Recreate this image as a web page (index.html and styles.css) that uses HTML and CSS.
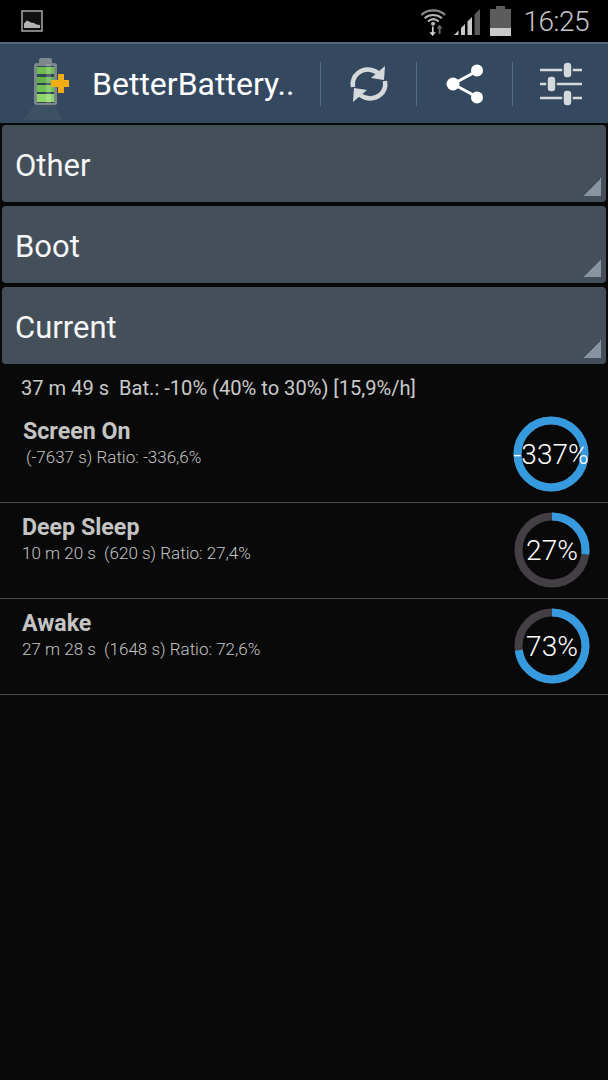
FILE: index.html
```html
<!DOCTYPE html>
<html lang="en">
<head>
<meta charset="utf-8">
<title>BetterBatteryStats</title>
<link rel="stylesheet" href="styles.css">
</head>
<body>
<header class="status">
  <svg class="st-pic" width="22" height="22" viewBox="0 0 22 22"><rect x="1" y="1" width="20" height="20" fill="#111" stroke="#b4b4b4" stroke-width="1.4"/><path d="M3 18V13.500L6 10.500 10 12.500 13 13 15.500 14.500 19 15V18Z" fill="#b4b4b4"/></svg>
  <div class="st-right">
    <svg class="st-wifi" width="28" height="30" viewBox="0 0 30 32"><g fill="none" stroke="#b5b5b5" stroke-width="2.200"><path d="M1.500 9.500C8 3 20 3 27 9.500" stroke="#8a8a8a"/><path d="M5 13C10 8.500 18 8.500 23.500 13"/><path d="M8.500 16.500C12 13.500 16.500 13.500 20 16.500"/></g><circle cx="14" cy="19" r="2.200" fill="#b5b5b5"/><path d="M12.800 22V28H10L13.500 32 17 28H14.600V22Z" fill="#d0d0d0"/><path d="M20 30V24H17.800L21 20 24.300 24H22V30Z" fill="#6d6d6d"/></svg>
    <svg class="st-signal" width="27" height="26" viewBox="0 0 27 26"><path d="M0 26L4.500 21.500V26Z" fill="#c8c8c8"/><path d="M7 19L11 15V26H7Z" fill="#c8c8c8"/><path d="M13.500 12.500L18 8V26H13.500Z" fill="#c8c8c8"/><path d="M20.500 5.500L26 0V26H20.500Z" fill="#5a5a5a"/></svg>
    <svg class="st-batt" width="21" height="30" viewBox="0 0 21 30"><path d="M6 0H15V3H21V30H0V3H6Z" fill="#5c5c5c"/><rect y="22" width="21" height="8" fill="#c9c9c9"/></svg>
    <span class="st-time">16:25</span>
  </div>
</header>
<nav class="bar">
  <svg class="logo" width="54" height="66" viewBox="0 0 54 66">
    <path d="M4 64L16 49H36L43 64Z" fill="#46586a" opacity=".55"/>
    <rect x="20" y="2" width="13" height="6" rx="2" fill="#7d8a8d"/>
    <rect x="15" y="7" width="23" height="42" rx="2.500" fill="#7b878a"/>
    <rect x="18" y="10" width="17" height="37" fill="#2f4552"/>
    <rect x="18" y="11" width="17" height="7" fill="#70bc50"/>
    <rect x="18" y="21" width="17" height="6" fill="#66b04c"/>
    <rect x="18" y="29" width="17" height="7" fill="#72c054"/>
    <rect x="18" y="38" width="17" height="8" fill="#8ed468"/>
    <rect x="27" y="8" width="5" height="39" fill="#fff" opacity=".18"/>
    <path d="M32 24H39V18H45V24H50V31H45V37H39V31H32Z" fill="#f0ae14"/>
  </svg>
  <span class="bar-title">BetterBattery..</span>
  <span class="sep sep-first"></span>
  <span class="action">
    <svg width="40" height="42" viewBox="0 0 40 42" fill="none"><path d="M4 24C2 12 13 4 24 7.500C27 8.500 29.500 10 31 12" stroke="#d6d9db" stroke-width="4.500"/><path d="M36 3L35 17 22 15Z" fill="#d6d9db"/><path d="M36 18C38 30 27 38 16 34.500C13 33.500 10.500 32 9 30" stroke="#d6d9db" stroke-width="4.500"/><path d="M4 39L5 25 18 27Z" fill="#d6d9db"/></svg>
  </span>
  <span class="sep"></span>
  <span class="action">
    <svg width="40" height="42" viewBox="0 0 40 42"><path d="M8 21L32 8M8 21L32 34" stroke="#fff" stroke-width="3"/><circle cx="8" cy="21" r="6.500" fill="#fff"/><circle cx="32" cy="7.500" r="6" fill="#fff"/><circle cx="32" cy="34.500" r="6" fill="#fff"/></svg>
  </span>
  <span class="sep"></span>
  <span class="action">
    <svg width="44" height="44" viewBox="0 0 44 44"><g stroke="#d6d9db" stroke-width="2.600"><path d="M1 8H43M1 22H43M1 36H43"/></g><g fill="#d6d9db" stroke="#34495f" stroke-width="1.600"><rect x="24" y="0" width="9" height="16" rx="4"/><rect x="8" y="14" width="9" height="16" rx="4"/><rect x="24" y="28" width="9" height="16" rx="4"/></g></svg>
  </span>
</nav>
<main class="content">
  <div class="spinners">
    <div class="spinner">Other</div>
    <div class="spinner">Boot</div>
    <div class="spinner">Current</div>
  </div>
  <p class="summary">37 m 49 s&nbsp; Bat.: -10% (40% to 30%) [15,9%/h]</p>
  <section class="row row-first">
    <div class="row-text row-text-a">
      <div class="row-title">Screen On</div>
      <div class="row-sub row-sub-a">(-7637 s) Ratio: -336,6%</div>
    </div>
    <div class="donut donut-a">
      <svg width="78" height="78" viewBox="0 0 78 78"><circle class="ring-bg" cx="39" cy="39" r="33.500"/><circle class="ring-fg" cx="39" cy="39" r="33.500" pathLength="100" stroke-dasharray="100 0" transform="rotate(-90 39 39)"/></svg>
      <span class="donut-label">-337%</span>
    </div>
  </section>
  <section class="row">
    <div class="row-text">
      <div class="row-title">Deep Sleep</div>
      <div class="row-sub">10 m 20 s&nbsp; (620 s) Ratio: 27,4%</div>
    </div>
    <div class="donut">
      <svg width="78" height="78" viewBox="0 0 78 78"><circle class="ring-bg" cx="39" cy="39" r="33.500"/><circle class="ring-fg" cx="39" cy="39" r="33.500" pathLength="100" stroke-dasharray="27 73" transform="rotate(-90 39 39)"/></svg>
      <span class="donut-label">27%</span>
    </div>
  </section>
  <section class="row">
    <div class="row-text">
      <div class="row-title">Awake</div>
      <div class="row-sub">27 m 28 s&nbsp; (1648 s) Ratio: 72,6%</div>
    </div>
    <div class="donut">
      <svg width="78" height="78" viewBox="0 0 78 78"><circle class="ring-bg" cx="39" cy="39" r="33.500"/><circle class="ring-fg" cx="39" cy="39" r="33.500" pathLength="100" stroke-dasharray="73 27" transform="rotate(-90 39 39)"/></svg>
      <span class="donut-label">73%</span>
    </div>
  </section>
</main>
</body>
</html>
```
FILE: styles.css
```css
* { box-sizing: border-box; }
html, body { margin: 0; padding: 0; }
body {
  width: 608px;
  height: 1080px;
  overflow: hidden;
  background: #090909;
  font-family: Roboto, "Liberation Sans", sans-serif;
  color: #fff;
}
.status {
  height: 42px;
  background: #000;
  display: flex;
  align-items: center;
  justify-content: space-between;
  padding: 0 19px 0 21px;
}
.st-pic { display: block; }
.st-right { display: flex; align-items: center; }
.st-wifi { display: block; margin: 0; }
.st-signal { display: block; margin: 1px 0 0 6px; }
.st-batt { display: block; margin: 0 0 0 9px; }
.st-time {
  margin-left: 12px;
  font-size: 28px;
  font-weight: 300;
  color: #c6c6c6;
  letter-spacing: -0.5px;
}
.bar {
  height: 81px;
  background: #34495f;
  border-top: 2px solid #4e6980;
  display: flex;
  align-items: center;
  padding-left: 19px;
}
.logo { display: block; margin-top: 10px; }
.bar-title {
  width: 228px;
  margin-left: 19px;
  font-size: 32px;
  color: #fff;
  white-space: nowrap;
}
.sep { width: 1px; height: 44px; background: #566f86; flex: none; }
.action {
  width: 95px;
  display: flex;
  justify-content: center;
  align-items: center;
}
.action svg { display: block; }
.spinners {
  display: flex;
  flex-direction: column;
  gap: 4px;
  padding: 2px 2px 0;
}
.spinner {
  height: 77px;
  border-radius: 4px;
  background-color: #454f5a;
  background-image: linear-gradient(135deg, transparent 50%, #8795a3 50%);
  background-repeat: no-repeat;
  background-size: 18px 18px;
  background-position: right 5px bottom 6px;
  padding: 0 13px 0;
  line-height: 81px;
  font-size: 31px;
  color: #f4f6f7;
}
.summary {
  margin: 0;
  padding: 12px 0 0 21px;
  height: 39px;
  font-size: 20.1px;
  line-height: 24px;
  color: #c9c9c9;
  white-space: nowrap;
}
.row {
  height: 96px;
  border-bottom: 1px solid #4a4a4a;
  display: flex;
  justify-content: space-between;
  align-items: flex-start;
  padding: 0 17px 0 22px;
}
.row-first { height: 100px; padding-top: 0; }
.row-text { padding-top: 10px; }
.row-text-a { padding-left: 1px; padding-top: 14px; }
.row-title {
  font-size: 23.2px;
  font-weight: 700;
  line-height: 28px;
  color: #c4c4c4;
}
.row-sub {
  font-size: 17px;
  font-weight: 300;
  line-height: 22px;
  color: #c4c4c4;
  margin-top: 1px;
}
.row-sub-a { padding-left: 3px; }
.donut {
  display: grid;
  place-items: center;
  width: 78px;
  height: 78px;
  margin-top: 8px;
}
.donut-a { margin: 12px 1px 0 0; }
.donut > * { grid-area: 1 / 1; }
.donut svg { display: block; }
.ring-bg { fill: none; stroke: #443f45; stroke-width: 8px; }
.ring-fg { fill: none; stroke: #359ade; stroke-width: 8px; }
.donut-label {
  font-size: 28px;
  font-weight: 300;
  color: #fff;
  white-space: nowrap;
}
```
